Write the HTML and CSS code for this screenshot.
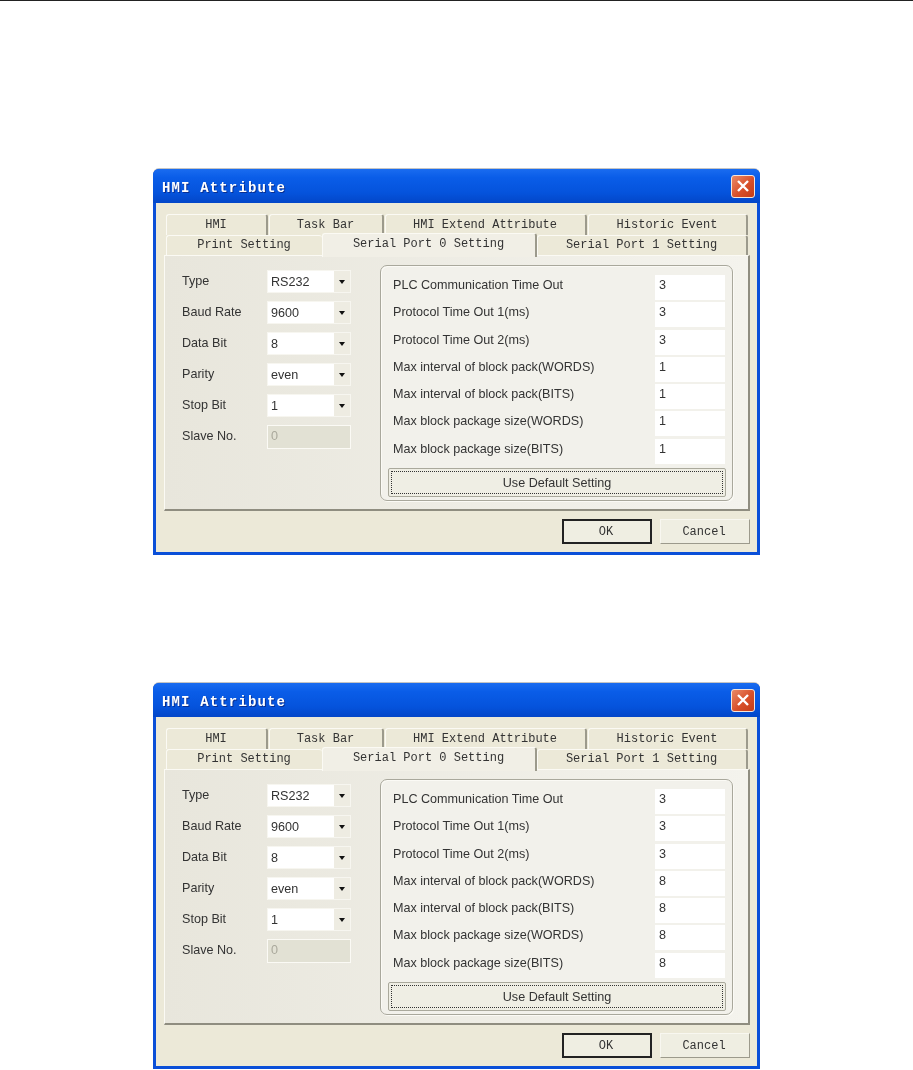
FILE: index.html
```html
<!DOCTYPE html>
<html lang="en">
<head>
    <meta charset="UTF-8">
    <meta name="viewport" content="width=device-width, initial-scale=1.0">
    <title>HMI Attribute</title>
    <link rel="stylesheet" href="styles.css">
</head>
<body>

    <div class="page-rule"></div>

    <!-- first dialog -->
    <div class="dialog dialog-first">
        <div class="title-bar">
            <span class="title-text">HMI Attribute</span>
            <span class="close-btn">
                <svg width="16" height="16" viewBox="0 0 16 16"><path d="M3 3 L13 13 M13 3 L3 13" stroke="#fff" stroke-width="2.4"/></svg>
            </span>
        </div>
        <div class="dialog-body">
            <div class="tab-row">
                <span class="tab tab-a">HMI</span>
                <span class="tab tab-b">Task Bar</span>
                <span class="tab tab-c">HMI Extend Attribute</span>
                <span class="tab tab-d">Historic Event</span>
            </div>
            <div class="tab-row tab-row-front">
                <span class="tab tab-e">Print Setting</span>
                <span class="tab tab-active">Serial Port 0 Setting</span>
                <span class="tab tab-f">Serial Port 1 Setting</span>
            </div>
            <div class="panel">
                <div class="left-col">
                    <div class="field"><label>Type</label><div class="select"><span>RS232</span><i class="arrow"></i></div></div>
                    <div class="field"><label>Baud Rate</label><div class="select"><span>9600</span><i class="arrow"></i></div></div>
                    <div class="field"><label>Data Bit</label><div class="select"><span>8</span><i class="arrow"></i></div></div>
                    <div class="field"><label>Parity</label><div class="select"><span>even</span><i class="arrow"></i></div></div>
                    <div class="field"><label>Stop Bit</label><div class="select"><span>1</span><i class="arrow"></i></div></div>
                    <div class="field"><label>Slave No.</label><div class="select disabled"><span>0</span></div></div>
                </div>
                <div class="group-box">
                    <div class="row"><label>PLC Communication Time Out</label><div class="num">3</div></div>
                    <div class="row"><label>Protocol Time Out 1(ms)</label><div class="num">3</div></div>
                    <div class="row"><label>Protocol Time Out 2(ms)</label><div class="num">3</div></div>
                    <div class="row"><label>Max interval of block pack(WORDS)</label><div class="num">1</div></div>
                    <div class="row"><label>Max interval of block pack(BITS)</label><div class="num">1</div></div>
                    <div class="row"><label>Max block package size(WORDS)</label><div class="num">1</div></div>
                    <div class="row"><label>Max block package size(BITS)</label><div class="num">1</div></div>
                    <div class="default-btn"><span>Use Default Setting</span></div>
                </div>
            </div>
            <div class="footer">
                <span class="btn btn-ok">OK</span>
                <span class="btn">Cancel</span>
            </div>
        </div>
    </div>

    <!-- second dialog, same thing with 8s -->
    <div class="dialog dialog-second">
        <div class="title-bar">
            <span class="title-text">HMI Attribute</span>
            <span class="close-btn">
                <svg width="16" height="16" viewBox="0 0 16 16"><path d="M3 3 L13 13 M13 3 L3 13" stroke="#fff" stroke-width="2.4"/></svg>
            </span>
        </div>
        <div class="dialog-body">
            <div class="tab-row">
                <span class="tab tab-a">HMI</span>
                <span class="tab tab-b">Task Bar</span>
                <span class="tab tab-c">HMI Extend Attribute</span>
                <span class="tab tab-d">Historic Event</span>
            </div>
            <div class="tab-row tab-row-front">
                <span class="tab tab-e">Print Setting</span>
                <span class="tab tab-active">Serial Port 0 Setting</span>
                <span class="tab tab-f">Serial Port 1 Setting</span>
            </div>
            <div class="panel">
                <div class="left-col">
                    <div class="field"><label>Type</label><div class="select"><span>RS232</span><i class="arrow"></i></div></div>
                    <div class="field"><label>Baud Rate</label><div class="select"><span>9600</span><i class="arrow"></i></div></div>
                    <div class="field"><label>Data Bit</label><div class="select"><span>8</span><i class="arrow"></i></div></div>
                    <div class="field"><label>Parity</label><div class="select"><span>even</span><i class="arrow"></i></div></div>
                    <div class="field"><label>Stop Bit</label><div class="select"><span>1</span><i class="arrow"></i></div></div>
                    <div class="field"><label>Slave No.</label><div class="select disabled"><span>0</span></div></div>
                </div>
                <div class="group-box">
                    <div class="row"><label>PLC Communication Time Out</label><div class="num">3</div></div>
                    <div class="row"><label>Protocol Time Out 1(ms)</label><div class="num">3</div></div>
                    <div class="row"><label>Protocol Time Out 2(ms)</label><div class="num">3</div></div>
                    <div class="row"><label>Max interval of block pack(WORDS)</label><div class="num">8</div></div>
                    <div class="row"><label>Max interval of block pack(BITS)</label><div class="num">8</div></div>
                    <div class="row"><label>Max block package size(WORDS)</label><div class="num">8</div></div>
                    <div class="row"><label>Max block package size(BITS)</label><div class="num">8</div></div>
                    <div class="default-btn"><span>Use Default Setting</span></div>
                </div>
            </div>
            <div class="footer">
                <span class="btn btn-ok">OK</span>
                <span class="btn">Cancel</span>
            </div>
        </div>
    </div>

</body>
</html>
```

FILE: styles.css
```css
html, body {
    margin: 0;
    padding: 0;
}
body {
    background: #fff;
    font-family: "Liberation Sans", Arial, sans-serif;
    color: #333;
    height: 1070px;
    overflow: hidden;
}
.page-rule {
    height: 1px;
    background: #222;
}
.dialog {
    width: 607px;
    height: 386px;
    margin-left: 153px;
    box-sizing: border-box;
    display: flex;
    flex-direction: column;
    background: #0a4fd8;
    border-radius: 6px 6px 0 0;
    box-shadow: 0 -1px 0 #c4c4c4;
    padding: 0 3px 3px;
    filter: blur(0.4px);
}
.dialog-first {
    margin-top: 168px;
}
.dialog-second {
    margin-top: 128px;
}
.title-bar {
    height: 34px;
    flex: none;
    display: flex;
    align-items: center;
    justify-content: space-between;
    margin: 0 -3px;
    padding: 4px 5px 0 9px;
    box-sizing: border-box;
    border-radius: 6px 6px 0 0;
    background: linear-gradient(#1a6cf0 0%, #0a5de8 25%, #0553dc 70%, #0346c8 100%);
}
.title-text {
    font-family: "Liberation Mono", monospace;
    font-weight: bold;
    font-size: 14px;
    letter-spacing: 1.15px;
    color: #fff;
    text-shadow: 1px 1px 0 #0a2f90;
}
.close-btn {
    width: 24px;
    height: 23px;
    margin-top: -4px;
    display: flex;
    align-items: center;
    justify-content: center;
    box-sizing: border-box;
    border: 1px solid #f4e6dc;
    border-radius: 3px;
    background: linear-gradient(135deg, #e98a68, #d8502a 55%, #c43c18);
}
.dialog-body {
    flex: 1;
    background: #ece9d8;
    padding: 11px 7px 0 8px;
    display: flex;
    flex-direction: column;
}
.tab-row {
    display: flex;
    height: 21px;
    margin-left: 2px;
    font-family: "Liberation Mono", monospace;
    font-size: 12px;
}
.tab-row-front {
    height: 20px;
    position: relative;
    z-index: 1;
}
.tab {
    box-sizing: border-box;
    display: flex;
    align-items: center;
    justify-content: center;
    height: 100%;
    padding-right: 1px;
    padding-bottom: 1px;
    background: #ece9d8;
    border-top: 1px solid #fbfaf4;
    border-left: 1px solid #fbfaf4;
    border-right: 2px solid #9c9a8c;
    border-radius: 3px 3px 0 0;
}
.tab-a { width: 102px; margin-right: 1px; }
.tab-b { width: 115px; margin-right: 1px; }
.tab-c { width: 202px; margin-right: 1px; }
.tab-d { width: 160px; }
.tab-e { width: 156px; border-right: none; }
.tab-f { width: 211px; }
.tab-active {
    width: 215px;
    height: 24px;
    margin-top: -2px;
    padding-bottom: 4px;
    background: #f1efe6;
    z-index: 2;
}
.panel {
    flex: none;
    height: 256px;
    box-sizing: border-box;
    display: flex;
    padding: 9px 15px 0 17px;
    background: linear-gradient(90deg, #e8e6dc, #f4f3ed);
    border-top: 1px solid #fbfaf4;
    border-left: 1px solid #fbfaf4;
    border-right: 2px solid #8f8d80;
    border-bottom: 2px solid #8f8d80;
}
.left-col {
    width: 198px;
    flex: none;
    padding-top: 5px;
}
.field {
    display: flex;
    height: 31px;
    align-items: flex-start;
    font-size: 12.6px;
}
.field label {
    width: 85px;
    flex: none;
    padding-top: 4px;
}
.select {
    width: 84px;
    height: 23px;
    box-sizing: border-box;
    display: flex;
    align-items: center;
    justify-content: space-between;
    background: #fff;
    border: 1px solid #f7f6f0;
    padding-left: 3px;
}
.select.disabled {
    height: 24px;
    padding-bottom: 3px;
    background: #e2e1d4;
    border-color: #fbfaf5;
    color: #aaa99c;
}
.arrow {
    width: 16px;
    height: 21px;
    flex: none;
    background: #eeece2;
    display: flex;
    align-items: center;
    justify-content: center;
}
.arrow::after {
    content: "";
    border-left: 3.5px solid transparent;
    border-right: 3.5px solid transparent;
    border-top: 4px solid #111;
}
.group-box {
    width: 353px;
    height: 236px;
    box-sizing: border-box;
    padding: 9px 7px 0 12px;
    border: 1px solid #a9a89c;
    border-radius: 7px;
    box-shadow: inset 1px 1px 0 #fbfaf5, 1px 1px 0 #fbfaf5;
    background: #f2f1eb;
}
.row {
    display: flex;
    justify-content: space-between;
    align-items: flex-start;
    height: 27.3px;
    font-size: 12.6px;
}
.row label {
    padding-top: 3px;
}
.num {
    width: 70px;
    height: 25px;
    box-sizing: border-box;
    background: #fff;
    padding: 3px 0 0 4px;
}
.default-btn {
    margin: 2px -1px 0 -5px;
    height: 29px;
    box-sizing: border-box;
    padding: 2px;
    background: #efeee4;
    border: 1px solid #aaa99c;
    border-radius: 2px;
    font-size: 12.6px;
}
.default-btn span {
    display: flex;
    align-items: center;
    justify-content: center;
    height: 100%;
    box-sizing: border-box;
    border: 1px dotted #333;
}
.footer {
    flex: 1;
    display: flex;
    justify-content: flex-end;
    align-items: flex-start;
    gap: 8px;
    padding-top: 8px;
}
.btn {
    width: 90px;
    height: 25px;
    box-sizing: border-box;
    display: flex;
    align-items: center;
    justify-content: center;
    font-family: "Liberation Mono", monospace;
    font-size: 12px;
    padding-right: 2px;
    background: #efeee2;
    border: 1px solid #f8f7f0;
    border-right-color: #9c9a8c;
    border-bottom-color: #9c9a8c;
}
.btn-ok {
    border: 2px solid #222;
}
```
